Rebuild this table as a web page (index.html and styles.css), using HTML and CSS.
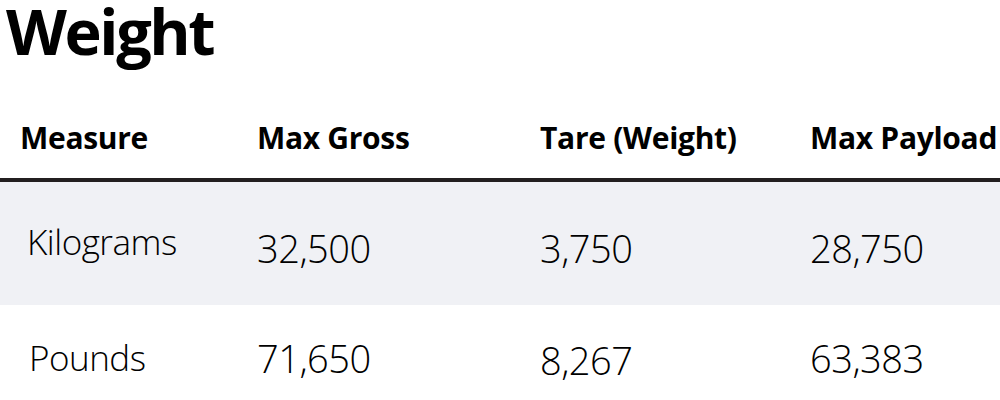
FILE: index.html
```html
<!DOCTYPE html>
<html>
<head>
<meta charset="utf-8">
<link rel="stylesheet" href="styles.css">
</head>
<body>
<h1 class="title">Weight</h1>
<table class="spec">
  <colgroup>
    <col class="c1"><col class="c2"><col class="c3"><col class="c4">
  </colgroup>
  <thead>
    <tr><th>Measure</th><th>Max Gross</th><th>Tare (Weight)</th><th>Max Payload</th></tr>
  </thead>
  <tbody>
    <tr class="alt"><td class="label">Kilograms</td><td>32,500</td><td>3,750</td><td>28,750</td></tr>
    <tr class="last"><td class="label">Pounds</td><td>71,650</td><td class="low">8,267</td><td>63,383</td></tr>
  </tbody>
</table>
</body>
</html>
```
FILE: styles.css
```css
html, body { margin: 0; padding: 0; background: #fff; }
html { height: 400px; overflow: hidden; }
body { font-family: "Open Sans", "Noto Sans", sans-serif; color: #000; width: 1000px; height: 400px; overflow: hidden; }
.title { margin: 0; padding: 0 0 0 6px; font-size: 63px; font-weight: 700; line-height: 62px; height: 108px; letter-spacing: -2.4px; }
.spec { border-collapse: collapse; width: 1040px; table-layout: fixed; }
.c1 { width: 257px; } .c2 { width: 283px; } .c3 { width: 270px; } .c4 { width: 230px; }
.spec th { text-align: left; font-size: 30px; font-weight: 700; line-height: 41px; padding: 9px 0 20px 0; vertical-align: top; border-bottom: 4px solid #231f20; letter-spacing: -0.3px; }
.spec th:first-child { padding-left: 20px; }
.spec td { font-size: 38px; font-weight: 300; line-height: 52px; vertical-align: top; padding: 40px 0 31px 0; letter-spacing: -0.5px; white-space: nowrap; }
.spec td.label { padding: 36px 0 39px 27px; font-size: 35px; line-height: 48px; }
.spec tr.alt td { background: #f0f1f5; }
.spec tr.last td { padding-top: 27px; }
.spec tr.last td.low { padding-top: 29px; }
.spec tr.last td.label { padding-top: 29px; padding-left: 29px; }
```
